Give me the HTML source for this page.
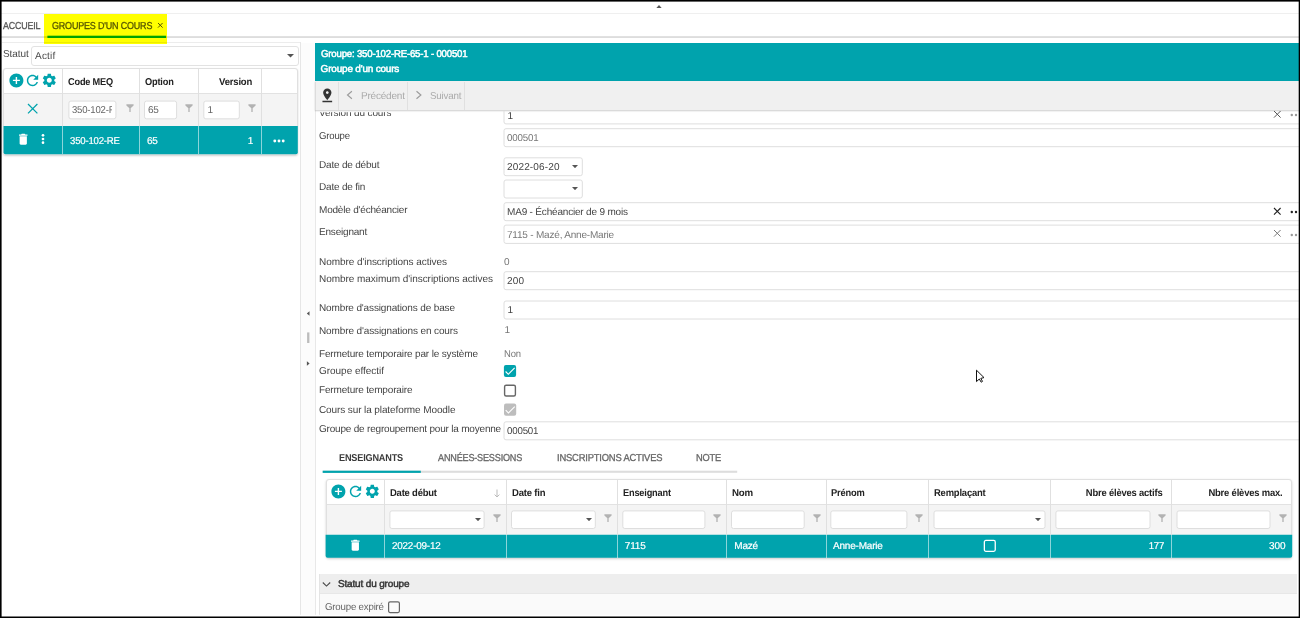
<!DOCTYPE html>
<html lang="fr"><head><meta charset="utf-8"><title>Groupes d'un cours</title>
<style>
html,body{margin:0;padding:0;}
body{width:1300px;height:618px;position:relative;overflow:hidden;background:#fff;font-family:"Liberation Sans", sans-serif;text-rendering:geometricPrecision;}
.b{position:absolute;box-sizing:content-box;display:block;}
.t{position:absolute;white-space:pre;line-height:1;margin:0;}
</style></head><body>
<div class="b" style="left:0px;top:13px;width:1300px;height:1px;background:#efefef;"></div>
<svg class="b" style="left:655.5px;top:4.8px;" width="6" height="3.4" viewBox="0 0 6 3.400"><path fill="#555" d="M0 3.400H6L3 0z"/></svg>
<svg class="b" style="left:0px;top:35px;" width="1300" height="4" viewBox="0 0 1300 4"><rect x="0" y="1.200" width="1300" height="1.700" fill="#dadada"/></svg>
<svg class="b" style="left:46px;top:34px;" width="122" height="6" viewBox="0 0 122 6"><rect x="1.400" y="1.700" width="118.600" height="2.300" fill="#00a3ad"/></svg>
<svg class="b" style="left:156.95px;top:22.3px;" width="6.6" height="6.6" viewBox="0 0 6.6 6.6"><path stroke="#555" stroke-width="1.0" fill="none" d="M1 1L5.6 5.6M5.6 1L1 5.6"/></svg>
<div class="b" style="left:2px;top:42px;width:298px;height:1px;background:#ececec;"></div>
<div class="b" style="left:300px;top:42px;width:1px;height:576px;background:#e6e6e6;"></div>
<div class="b" style="left:31px;top:46px;width:266px;height:18px;background:#fff;border:1px solid #e2e2e2;border-radius:3px;"></div>
<svg class="b" style="left:287.2px;top:54.2px;" width="7" height="3.6" viewBox="0 0 7 3.6"><path fill="#555" d="M0 0H7L3.5 3.6z"/></svg>
<div class="b" style="left:3px;top:68px;width:293px;height:85px;background:#fff;border:1px solid #e0e0e0;border-radius:3px;box-shadow:0 1px 2px rgba(0,0,0,.18);"></div>
<div class="b" style="left:4px;top:93.5px;width:293px;height:32.5px;background:#f4f4f4;"></div>
<div class="b" style="left:4px;top:93px;width:293px;height:1px;background:#e2e2e2;"></div>
<svg class="b" style="left:3px;top:125px;" width="296" height="31" viewBox="0 0 296 31"><path fill="#00a3ad" d="M0.550 1.050H294.800V27.200Q294.800 29.200 292.800 29.200H2.550Q0.550 29.200 0.550 27.200z"/></svg>
<div class="b" style="left:62px;top:69px;width:1px;height:57px;background:#e0e0e0;"></div>
<div class="b" style="left:62px;top:126px;width:1px;height:28.3px;background:rgba(255,255,255,.55);"></div>
<div class="b" style="left:139px;top:69px;width:1px;height:57px;background:#e0e0e0;"></div>
<div class="b" style="left:139px;top:126px;width:1px;height:28.3px;background:rgba(255,255,255,.55);"></div>
<div class="b" style="left:198px;top:69px;width:1px;height:57px;background:#e0e0e0;"></div>
<div class="b" style="left:198px;top:126px;width:1px;height:28.3px;background:rgba(255,255,255,.55);"></div>
<div class="b" style="left:261px;top:69px;width:1px;height:57px;background:#e0e0e0;"></div>
<div class="b" style="left:261px;top:126px;width:1px;height:28.3px;background:rgba(255,255,255,.55);"></div>
<svg class="b" style="left:7.8px;top:71.5px;" width="16.8" height="16.8" viewBox="0 0 24 24"><path fill="#00a3ad" d="M12 2C6.48 2 2 6.48 2 12s4.48 10 10 10 10-4.48 10-10S17.52 2 12 2zm5 11h-4v4h-2v-4H7v-2h4V7h2v4h4v2z"/></svg>
<svg class="b" style="left:24.3px;top:71.6px;" width="17" height="17" viewBox="0 0 24 24"><path fill="#00a3ad" d="M17.65 6.35C16.2 4.9 14.21 4 12 4c-4.42 0-7.99 3.58-7.99 8s3.57 8 7.99 8c3.73 0 6.84-2.55 7.73-6h-2.08c-.82 2.33-3.04 4-5.65 4-3.31 0-6-2.69-6-6s2.69-6 6-6c1.66 0 3.14.69 4.22 1.78L13 11h7V4l-2.35 2.35z"/></svg>
<svg class="b" style="left:41.4px;top:71.7px;" width="16.6" height="16.6" viewBox="0 0 24 24"><path fill="#00a3ad" d="M19.14 12.94c.04-.3.06-.61.06-.94 0-.32-.02-.64-.07-.94l2.03-1.58c.18-.14.23-.41.12-.61l-1.92-3.32c-.12-.22-.37-.29-.59-.22l-2.39.96c-.5-.38-1.03-.7-1.62-.94l-.36-2.54c-.04-.24-.24-.41-.48-.41h-3.84c-.24 0-.43.17-.47.41l-.36 2.54c-.59.24-1.13.57-1.62.94l-2.39-.96c-.22-.08-.47 0-.59.22L2.74 8.87c-.12.21-.08.47.12.61l2.03 1.58c-.05.3-.09.63-.09.94s.02.64.07.94l-2.03 1.58c-.18.14-.23.41-.12.61l1.92 3.32c.12.22.37.29.59.22l2.39-.96c.5.38 1.03.7 1.62.94l.36 2.54c.05.24.24.41.48.41h3.84c.24 0 .44-.17.47-.41l.36-2.54c.59-.24 1.13-.56 1.62-.94l2.39.96c.22.08.47 0 .59-.22l1.92-3.32c.12-.22.07-.47-.12-.61l-2.01-1.580zM12 15.6c-1.980 0-3.600-1.620-3.600-3.600s1.620-3.600 3.600-3.600 3.600 1.620 3.600 3.600-1.620 3.600-3.600 3.600z"/></svg>
<svg class="b" style="left:27.3px;top:102.7px;" width="11.4" height="11.4" viewBox="0 0 11.4 11.4"><path stroke="#00a3ad" stroke-width="1.25" fill="none" d="M1 1L10.4 10.4M10.4 1L1 10.4"/></svg>
<svg class="b" style="left:67px;top:99px;" width="52" height="22" viewBox="0 0 52 22"><rect x="1.90" y="2.10" width="47.00" height="17.70" rx="2" fill="#fff" stroke="#dedede" stroke-width="1"/></svg>
<svg class="b" style="left:126.3px;top:103.9px;" width="8" height="8.4" viewBox="0 0 8 8.400"><path fill="#b2b2b2" d="M0.400 0.300H7.600V1.500L4.650 4.300V8H3.350V4.300L0.400 1.500z"/></svg>
<svg class="b" style="left:143px;top:99px;" width="37" height="22" viewBox="0 0 37 22"><rect x="1.50" y="2.10" width="32.10" height="17.70" rx="2" fill="#fff" stroke="#dedede" stroke-width="1"/></svg>
<svg class="b" style="left:184.9px;top:103.9px;" width="8" height="8.4" viewBox="0 0 8 8.400"><path fill="#b2b2b2" d="M0.400 0.300H7.600V1.500L4.650 4.300V8H3.350V4.300L0.400 1.500z"/></svg>
<svg class="b" style="left:202px;top:99px;" width="40" height="22" viewBox="0 0 40 22"><rect x="1.80" y="2.10" width="35.50" height="17.70" rx="2" fill="#fff" stroke="#dedede" stroke-width="1"/></svg>
<svg class="b" style="left:247.65px;top:103.9px;" width="8" height="8.4" viewBox="0 0 8 8.400"><path fill="#b2b2b2" d="M0.400 0.300H7.600V1.500L4.650 4.300V8H3.350V4.300L0.400 1.500z"/></svg>
<svg class="b" style="left:15.6px;top:131.85px;" width="14.5" height="14.5" viewBox="0 0 24 24"><path fill="#fff" d="M6 19c0 1.100.900 2 2 2h8c1.100 0 2-.900 2-2V7H6v12zM19 4h-3.500l-1-1h-5l-1 1H5v2h14V4z"/></svg>
<svg class="b" style="left:41px;top:133.4px;" width="4" height="12" viewBox="0 0 4 12"><circle cx="2" cy="2.35" r="1.35" fill="#fff"/><circle cx="2" cy="6.0" r="1.35" fill="#fff"/><circle cx="2" cy="9.65" r="1.35" fill="#fff"/></svg>
<svg class="b" style="left:273.3px;top:138.5px;" width="12" height="4" viewBox="0 0 12 4"><circle cx="1.7999999999999998" cy="2" r="1.45" fill="#fff"/><circle cx="6.0" cy="2" r="1.45" fill="#fff"/><circle cx="10.2" cy="2" r="1.45" fill="#fff"/></svg>
<div class="b" style="left:301px;top:43px;width:14px;height:575px;background:#fcfcfc;"></div>
<div class="b" style="left:315px;top:43px;width:1px;height:575px;background:#e8e8e8;"></div>
<svg class="b" style="left:306px;top:310.5px;" width="4" height="5" viewBox="0 0 4 5"><path fill="#555" d="M3.500 0.300V4.700L0.800 2.500z"/></svg>
<svg class="b" style="left:306px;top:360.5px;" width="4" height="5" viewBox="0 0 4 5"><path fill="#555" d="M0.900 0.300V4.700L3.600 2.500z"/></svg>
<svg class="b" style="left:306px;top:332px;" width="5" height="12" viewBox="0 0 5 12"><rect x="1.100" y="0.400" width="2.300" height="10.600" fill="#bcbcbc"/></svg>
<div class="b" style="left:315.3px;top:43px;width:985px;height:37.6px;background:#00a3ad;"></div>
<div class="b" style="left:315.3px;top:80.6px;width:985px;height:29.5px;background:#f0f0f0;box-shadow:0 1px 1.500px rgba(0,0,0,.2);"></div>
<div class="b" style="left:315.3px;top:81.5px;width:1px;height:28.5px;background:#dcdcdc;"></div>
<div class="b" style="left:338px;top:81.5px;width:1px;height:28.5px;background:#e0e0e0;"></div>
<div class="b" style="left:407px;top:81.5px;width:1px;height:28.5px;background:#e0e0e0;"></div>
<div class="b" style="left:464px;top:81.5px;width:1px;height:28.5px;background:#e0e0e0;"></div>
<svg class="b" style="left:319.15px;top:87.0px;" width="16.6" height="16.6" viewBox="0 0 24 24"><path fill="#333" d="M18 8c0-3.310-2.690-6-6-6S6 4.690 6 8c0 4.500 6 11 6 11s6-6.500 6-11zm-8 0c0-1.100.900-2 2-2s2 .900 2 2-.890 2-2 2c-1.100 0-2-.900-2-2zM5 20v2h14v-2H5z"/></svg>
<svg class="b" style="left:346px;top:90.4px;" width="8" height="10" viewBox="0 0 8 10"><path fill="none" stroke="#9c9c9c" stroke-width="1.150" d="M5.900 1.300L1.500 5L5.900 8.700"/></svg>
<svg class="b" style="left:415px;top:90.4px;" width="8" height="10" viewBox="0 0 8 10"><path fill="none" stroke="#9c9c9c" stroke-width="1.150" d="M1.500 1.300L5.900 5L1.500 8.700"/></svg>
<svg class="b" style="left:502px;top:110px;" width="800" height="16" viewBox="0 0 800 16"><path fill="none" stroke="#dedede" stroke-width="1" d="M2 1V11.900Q2 13.900 4 13.900H800"/></svg>
<svg class="b" style="left:1272.7px;top:109.9px;" width="8.6" height="8.6" viewBox="0 0 8.6 8.6"><path stroke="#555" stroke-width="1.0" fill="none" d="M1 1L7.6 7.6M7.6 1L1 7.6"/></svg>
<svg class="b" style="left:1290.3px;top:113.3px;" width="12" height="4" viewBox="0 0 12 4"><circle cx="1.7999999999999998" cy="2" r="1.2" fill="#9a9a9a"/><circle cx="6.0" cy="2" r="1.2" fill="#9a9a9a"/><circle cx="10.2" cy="2" r="1.2" fill="#9a9a9a"/></svg>
<svg class="b" style="left:502px;top:127px;" width="804" height="23" viewBox="0 0 804 23"><rect x="2.00" y="1.70" width="799.00" height="18.00" rx="2" fill="#fff" stroke="#dedede" stroke-width="1"/></svg>
<svg class="b" style="left:502px;top:156px;" width="83" height="22" viewBox="0 0 83 22"><rect x="2.00" y="1.80" width="78.30" height="17.90" rx="2" fill="#fff" stroke="#dedede" stroke-width="1"/></svg>
<svg class="b" style="left:572.4px;top:165.3px;" width="6" height="3.2" viewBox="0 0 6 3.2"><path fill="#555" d="M0 0H6L3.0 3.2z"/></svg>
<svg class="b" style="left:502px;top:178px;" width="83" height="23" viewBox="0 0 83 23"><rect x="2.00" y="2.00" width="78.30" height="18.00" rx="2" fill="#fff" stroke="#dedede" stroke-width="1"/></svg>
<svg class="b" style="left:572.4px;top:187.3px;" width="6" height="3.2" viewBox="0 0 6 3.2"><path fill="#555" d="M0 0H6L3.0 3.2z"/></svg>
<svg class="b" style="left:502px;top:201px;" width="804" height="23" viewBox="0 0 804 23"><rect x="2.00" y="1.70" width="799.00" height="18.00" rx="2" fill="#fff" stroke="#dedede" stroke-width="1"/></svg>
<svg class="b" style="left:1272.7px;top:206.7px;" width="8.6" height="8.6" viewBox="0 0 8.6 8.6"><path stroke="#222" stroke-width="1.1" fill="none" d="M1 1L7.6 7.6M7.6 1L1 7.6"/></svg>
<svg class="b" style="left:1290.3px;top:210.2px;" width="12" height="4" viewBox="0 0 12 4"><circle cx="1.7999999999999998" cy="2" r="1.2" fill="#222"/><circle cx="6.0" cy="2" r="1.2" fill="#222"/><circle cx="10.2" cy="2" r="1.2" fill="#222"/></svg>
<svg class="b" style="left:502px;top:223px;" width="804" height="23" viewBox="0 0 804 23"><rect x="2.00" y="2.10" width="799.00" height="18.30" rx="2" fill="#fff" stroke="#dedede" stroke-width="1"/></svg>
<svg class="b" style="left:1272.7px;top:229.39999999999998px;" width="8.6" height="8.6" viewBox="0 0 8.6 8.6"><path stroke="#777" stroke-width="1.0" fill="none" d="M1 1L7.6 7.6M7.6 1L1 7.6"/></svg>
<svg class="b" style="left:1290.3px;top:232.9px;" width="12" height="4" viewBox="0 0 12 4"><circle cx="1.7999999999999998" cy="2" r="1.2" fill="#9a9a9a"/><circle cx="6.0" cy="2" r="1.2" fill="#9a9a9a"/><circle cx="10.2" cy="2" r="1.2" fill="#9a9a9a"/></svg>
<svg class="b" style="left:502px;top:270px;" width="804" height="23" viewBox="0 0 804 23"><rect x="2.00" y="1.70" width="799.00" height="18.00" rx="2" fill="#fff" stroke="#dedede" stroke-width="1"/></svg>
<svg class="b" style="left:502px;top:299px;" width="804" height="23" viewBox="0 0 804 23"><rect x="2.00" y="2.00" width="799.00" height="18.00" rx="2" fill="#fff" stroke="#dedede" stroke-width="1"/></svg>
<svg class="b" style="left:502px;top:363px;" width="16" height="16" viewBox="0 0 16 16"><rect x="1.90" y="1.90" width="12.2" height="12.2" rx="2" fill="#00a3ad"/><path fill="#fff" transform="translate(1.30 1.40) scale(0.5583)" d="M9 16.17L4.83 12l-1.420 1.410L9 19 21 7l-1.410-1.410z"/></svg>
<svg class="b" style="left:502px;top:383px;" width="16" height="16" viewBox="0 0 16 16"><rect x="2.60" y="2.20" width="10.80" height="10.80" rx="1.500" fill="#fff" stroke="#666" stroke-width="1.4"/></svg>
<svg class="b" style="left:503px;top:402px;" width="16" height="16" viewBox="0 0 16 16"><rect x="1.00" y="1.60" width="12.2" height="12.2" rx="2" fill="#bdbdbd"/><path fill="#fff" transform="translate(0.40 1.10) scale(0.5583)" d="M9 16.17L4.83 12l-1.420 1.410L9 19 21 7l-1.410-1.410z"/></svg>
<svg class="b" style="left:502px;top:420px;" width="804" height="23" viewBox="0 0 804 23"><rect x="2.00" y="1.80" width="799.00" height="18.00" rx="2" fill="#fff" stroke="#dedede" stroke-width="1"/></svg>
<svg class="b" style="left:322px;top:469px;" width="416" height="5" viewBox="0 0 416 5"><rect x="0.700" y="1.700" width="414.500" height="2.100" fill="#dddddd"/><rect x="0.700" y="1.700" width="98.100" height="2.200" fill="#00a3ad"/></svg>
<div class="b" style="left:325.5px;top:479px;width:964.8px;height:77px;background:#fff;border:1px solid #e0e0e0;border-radius:3px;box-shadow:0 1px 2.500px rgba(0,0,0,.2);"></div>
<div class="b" style="left:326.5px;top:505px;width:964.8px;height:30px;background:#f4f4f4;"></div>
<div class="b" style="left:326.5px;top:504.3px;width:964.8px;height:1px;background:#e2e2e2;"></div>
<svg class="b" style="left:325px;top:534px;" width="969" height="25" viewBox="0 0 969 25"><path fill="#00a3ad" d="M0.600 0.800H967.200V21.700Q967.200 23.700 965.200 23.700H2.600Q0.600 23.700 0.600 21.700z"/></svg>
<div class="b" style="left:384.3px;top:480px;width:1px;height:55px;background:#e0e0e0;"></div>
<div class="b" style="left:384.3px;top:534.7px;width:1px;height:23.2px;background:rgba(255,255,255,.55);"></div>
<div class="b" style="left:506.2px;top:480px;width:1px;height:55px;background:#e0e0e0;"></div>
<div class="b" style="left:506.2px;top:534.7px;width:1px;height:23.2px;background:rgba(255,255,255,.55);"></div>
<div class="b" style="left:617px;top:480px;width:1px;height:55px;background:#e0e0e0;"></div>
<div class="b" style="left:617px;top:534.7px;width:1px;height:23.2px;background:rgba(255,255,255,.55);"></div>
<div class="b" style="left:726.3px;top:480px;width:1px;height:55px;background:#e0e0e0;"></div>
<div class="b" style="left:726.3px;top:534.7px;width:1px;height:23.2px;background:rgba(255,255,255,.55);"></div>
<div class="b" style="left:825.5px;top:480px;width:1px;height:55px;background:#e0e0e0;"></div>
<div class="b" style="left:825.5px;top:534.7px;width:1px;height:23.2px;background:rgba(255,255,255,.55);"></div>
<div class="b" style="left:928.2px;top:480px;width:1px;height:55px;background:#e0e0e0;"></div>
<div class="b" style="left:928.2px;top:534.7px;width:1px;height:23.2px;background:rgba(255,255,255,.55);"></div>
<div class="b" style="left:1050.1px;top:480px;width:1px;height:55px;background:#e0e0e0;"></div>
<div class="b" style="left:1050.1px;top:534.7px;width:1px;height:23.2px;background:rgba(255,255,255,.55);"></div>
<div class="b" style="left:1171.3px;top:480px;width:1px;height:55px;background:#e0e0e0;"></div>
<div class="b" style="left:1171.3px;top:534.7px;width:1px;height:23.2px;background:rgba(255,255,255,.55);"></div>
<svg class="b" style="left:329.9px;top:482.7px;" width="16.8" height="16.8" viewBox="0 0 24 24"><path fill="#00a3ad" d="M12 2C6.48 2 2 6.48 2 12s4.48 10 10 10 10-4.48 10-10S17.52 2 12 2zm5 11h-4v4h-2v-4H7v-2h4V7h2v4h4v2z"/></svg>
<svg class="b" style="left:346.9px;top:482.7px;" width="17" height="17" viewBox="0 0 24 24"><path fill="#00a3ad" d="M17.65 6.35C16.2 4.9 14.21 4 12 4c-4.42 0-7.99 3.58-7.99 8s3.57 8 7.99 8c3.73 0 6.84-2.55 7.73-6h-2.08c-.82 2.33-3.04 4-5.65 4-3.31 0-6-2.69-6-6s2.69-6 6-6c1.66 0 3.14.69 4.22 1.78L13 11h7V4l-2.35 2.35z"/></svg>
<svg class="b" style="left:363.6px;top:482.8px;" width="16.6" height="16.6" viewBox="0 0 24 24"><path fill="#00a3ad" d="M19.14 12.94c.04-.3.06-.61.06-.94 0-.32-.02-.64-.07-.94l2.03-1.58c.18-.14.23-.41.12-.61l-1.92-3.32c-.12-.22-.37-.29-.59-.22l-2.39.96c-.5-.38-1.03-.7-1.62-.94l-.36-2.54c-.04-.24-.24-.41-.48-.41h-3.84c-.24 0-.43.17-.47.41l-.36 2.54c-.59.24-1.13.57-1.62.94l-2.39-.96c-.22-.08-.47 0-.59.22L2.74 8.87c-.12.21-.08.47.12.61l2.03 1.58c-.05.3-.09.63-.09.94s.02.64.07.94l-2.03 1.58c-.18.14-.23.41-.12.61l1.92 3.32c.12.22.37.29.59.22l2.39-.96c.5.38 1.03.7 1.62.94l.36 2.54c.05.24.24.41.48.41h3.84c.24 0 .44-.17.47-.41l.36-2.54c.59-.24 1.13-.56 1.62-.94l2.39.96c.22.08.47 0 .59-.22l1.92-3.32c.12-.22.07-.47-.12-.61l-2.01-1.580zM12 15.6c-1.980 0-3.600-1.620-3.600-3.600s1.620-3.600 3.600-3.600 3.600 1.620 3.600 3.600-1.620 3.600-3.600 3.600z"/></svg>
<svg class="b" style="left:493.7px;top:488.6px;" width="6" height="9" viewBox="0 0 6 9"><path fill="none" stroke="#bbb" stroke-width="1" d="M3 0.500V8M0.600 5.600L3 8L5.400 5.600"/></svg>
<svg class="b" style="left:388px;top:509px;" width="99" height="22" viewBox="0 0 99 22"><rect x="1.90" y="1.90" width="94.20" height="17.60" rx="2" fill="#fff" stroke="#dedede" stroke-width="1"/></svg>
<svg class="b" style="left:474.5px;top:518.0px;" width="6" height="3.2" viewBox="0 0 6 3.2"><path fill="#555" d="M0 0H6L3.0 3.2z"/></svg>
<svg class="b" style="left:492.7px;top:513.8px;" width="8" height="8.4" viewBox="0 0 8 8.400"><path fill="#b2b2b2" d="M0.400 0.300H7.600V1.500L4.650 4.300V8H3.350V4.300L0.400 1.500z"/></svg>
<svg class="b" style="left:510px;top:509px;" width="88" height="22" viewBox="0 0 88 22"><rect x="1.50" y="1.90" width="83.80" height="17.60" rx="2" fill="#fff" stroke="#dedede" stroke-width="1"/></svg>
<svg class="b" style="left:585.7px;top:518.0px;" width="6" height="3.2" viewBox="0 0 6 3.2"><path fill="#555" d="M0 0H6L3.0 3.2z"/></svg>
<svg class="b" style="left:603.8px;top:513.8px;" width="8" height="8.4" viewBox="0 0 8 8.400"><path fill="#b2b2b2" d="M0.400 0.300H7.600V1.500L4.650 4.300V8H3.350V4.300L0.400 1.500z"/></svg>
<svg class="b" style="left:621px;top:509px;" width="87" height="22" viewBox="0 0 87 22"><rect x="1.80" y="1.90" width="82.10" height="17.60" rx="2" fill="#fff" stroke="#dedede" stroke-width="1"/></svg>
<svg class="b" style="left:713px;top:513.8px;" width="8" height="8.4" viewBox="0 0 8 8.400"><path fill="#b2b2b2" d="M0.400 0.300H7.600V1.500L4.650 4.300V8H3.350V4.300L0.400 1.500z"/></svg>
<svg class="b" style="left:730px;top:509px;" width="77" height="22" viewBox="0 0 77 22"><rect x="1.50" y="1.90" width="72.70" height="17.60" rx="2" fill="#fff" stroke="#dedede" stroke-width="1"/></svg>
<svg class="b" style="left:812.5px;top:513.8px;" width="8" height="8.4" viewBox="0 0 8 8.400"><path fill="#b2b2b2" d="M0.400 0.300H7.600V1.500L4.650 4.300V8H3.350V4.300L0.400 1.500z"/></svg>
<svg class="b" style="left:829px;top:509px;" width="81" height="22" viewBox="0 0 81 22"><rect x="1.80" y="1.90" width="76.10" height="17.60" rx="2" fill="#fff" stroke="#dedede" stroke-width="1"/></svg>
<svg class="b" style="left:915.2px;top:513.8px;" width="8" height="8.4" viewBox="0 0 8 8.400"><path fill="#b2b2b2" d="M0.400 0.300H7.600V1.500L4.650 4.300V8H3.350V4.300L0.400 1.500z"/></svg>
<svg class="b" style="left:932px;top:509px;" width="116" height="22" viewBox="0 0 116 22"><rect x="2.00" y="1.90" width="111.00" height="17.60" rx="2" fill="#fff" stroke="#dedede" stroke-width="1"/></svg>
<svg class="b" style="left:1035.0px;top:517.8px;" width="6" height="3.2" viewBox="0 0 6 3.2"><path fill="#555" d="M0 0H6L3.0 3.2z"/></svg>
<svg class="b" style="left:1054px;top:509px;" width="99" height="22" viewBox="0 0 99 22"><rect x="1.90" y="1.90" width="94.10" height="17.60" rx="2" fill="#fff" stroke="#dedede" stroke-width="1"/></svg>
<svg class="b" style="left:1158.2px;top:513.8px;" width="8" height="8.4" viewBox="0 0 8 8.400"><path fill="#b2b2b2" d="M0.400 0.300H7.600V1.500L4.650 4.300V8H3.350V4.300L0.400 1.500z"/></svg>
<svg class="b" style="left:1175px;top:509px;" width="98" height="22" viewBox="0 0 98 22"><rect x="2.00" y="1.90" width="93.00" height="17.60" rx="2" fill="#fff" stroke="#dedede" stroke-width="1"/></svg>
<svg class="b" style="left:1278.7px;top:513.8px;" width="8" height="8.4" viewBox="0 0 8 8.400"><path fill="#b2b2b2" d="M0.400 0.300H7.600V1.500L4.650 4.300V8H3.350V4.300L0.400 1.500z"/></svg>
<svg class="b" style="left:348.15px;top:537.8px;" width="14.6" height="14.6" viewBox="0 0 24 24"><path fill="#fff" d="M6 19c0 1.100.900 2 2 2h8c1.100 0 2-.900 2-2V7H6v12zM19 4h-3.500l-1-1h-5l-1 1H5v2h14V4z"/></svg>
<svg class="b" style="left:982px;top:538px;" width="16" height="16" viewBox="0 0 16 16"><rect x="2.35" y="2.45" width="10.90" height="10.90" rx="1.500" fill="none" stroke="#fff" stroke-width="1.3"/></svg>
<div class="b" style="left:319px;top:574px;width:978px;height:20px;background:#eeeeee;"></div>
<div class="b" style="left:319px;top:594px;width:978px;height:22px;background:#fafafa;"></div>
<div class="b" style="left:319px;top:593px;width:978px;height:1px;background:#e7e7e7;"></div>
<div class="b" style="left:319px;top:574px;width:1px;height:42px;background:#e4e4e4;"></div>
<svg class="b" style="left:322.4px;top:580.6px;" width="9" height="7" viewBox="0 0 9 7"><path fill="none" stroke="#4a4a4a" stroke-width="1.100" d="M0.800 1.500L4.500 5.100L8.200 1.500"/></svg>
<svg class="b" style="left:387px;top:600px;" width="16" height="16" viewBox="0 0 16 16"><rect x="1.60" y="1.80" width="10.80" height="10.80" rx="1.500" fill="#fafafa" stroke="#666" stroke-width="1.2"/></svg>
<svg class="b" style="left:975px;top:369px;" width="11" height="14" viewBox="0 0 11 14"><path fill="#fff" stroke="#111" stroke-width="1" d="M1.500 1.200V12.600L4.300 10L6.200 13.200L7.500 12.400L5.800 9.400L9 8.600z"/></svg>
<span class="t" id="t0" style="top:22px;font-size:10px;color:#555;letter-spacing:-0.200px;left:3px;transform:scaleX(0.8895);transform-origin:0 0;-webkit-text-stroke:0.3px #555;">ACCUEIL</span>
<span class="t" id="t1" style="top:22px;font-size:10px;color:#555;letter-spacing:-0.200px;left:51.5px;transform:scaleX(0.8975);transform-origin:0 0;-webkit-text-stroke:0.3px #555;">GROUPES D'UN COURS</span>
<span class="t" id="t2" style="top:50px;font-size:10px;color:#484848;letter-spacing:-0.068px;left:3px;">Statut</span>
<span class="t" id="t3" style="top:52px;font-size:10px;color:#484848;letter-spacing:0.212px;left:35px;">Actif</span>
<span class="t" id="t4" style="top:78px;font-size:10px;color:#222;font-weight:700;letter-spacing:-0.200px;left:68px;transform:scaleX(0.9194);transform-origin:0 0;">Code MEQ</span>
<span class="t" id="t5" style="top:78px;font-size:10px;color:#222;font-weight:700;letter-spacing:-0.200px;left:145px;transform:scaleX(0.9225);transform-origin:0 0;">Option</span>
<span class="t" id="t6" style="top:78px;font-size:10px;color:#222;font-weight:700;letter-spacing:-0.200px;left:219px;transform:scaleX(0.9530);transform-origin:0 0;">Version</span>
<span class="t" id="t7" style="top:106px;font-size:10px;color:#666;letter-spacing:-0.200px;left:71.8px;transform:scaleX(0.9542);transform-origin:0 0;clip-path:inset(-3px 2.500px -3px 0);">350-102-F</span>
<span class="t" id="t8" style="top:106px;font-size:10px;color:#666;letter-spacing:-0.200px;left:147.9px;">65</span>
<span class="t" id="t9" style="top:106px;font-size:10px;color:#666;left:207.6px;">1</span>
<span class="t" id="t10" style="top:137px;font-size:10px;color:#fff;letter-spacing:-0.200px;left:69.5px;transform:scaleX(0.9593);transform-origin:0 0;-webkit-text-stroke:0.2px #fff;">350-102-RE</span>
<span class="t" id="t11" style="top:137px;font-size:10px;color:#fff;letter-spacing:-0.200px;left:147px;-webkit-text-stroke:0.2px #fff;">65</span>
<span class="t" id="t12" style="top:137px;font-size:10px;color:#fff;right:1046.70px;-webkit-text-stroke:0.2px #fff;">1</span>
<span class="t" id="t13" style="top:50px;font-size:10px;color:#fff;letter-spacing:-0.200px;left:320.6px;transform:scaleX(0.9630);transform-origin:0 0;-webkit-text-stroke:0.5px #fff;">Groupe: 350-102-RE-65-1 - 000501</span>
<span class="t" id="t14" style="top:65px;font-size:10px;color:#fff;letter-spacing:-0.200px;left:320.6px;-webkit-text-stroke:0.5px #fff;">Groupe d'un cours</span>
<span class="t" id="t15" style="top:92px;font-size:10px;color:#aaa;letter-spacing:-0.200px;left:361px;">Précédent</span>
<span class="t" id="t16" style="top:92px;font-size:10px;color:#aaa;letter-spacing:-0.200px;left:429.5px;transform:scaleX(0.9795);transform-origin:0 0;">Suivant</span>
<span class="t" id="t17" style="top:109px;font-size:10px;color:#444;letter-spacing:-0.133px;left:319px;clip-path:inset(3.300px 0 -3px 0);">Version du cours</span>
<span class="t" id="t18" style="top:112px;font-size:10px;color:#444;left:507.4px;">1</span>
<span class="t" id="t19" style="top:132px;font-size:10px;color:#444;letter-spacing:-0.200px;left:319px;transform:scaleX(0.9580);transform-origin:0 0;">Groupe</span>
<span class="t" id="t20" style="top:134px;font-size:10px;color:#777;letter-spacing:-0.200px;left:507.3px;transform:scaleX(0.9761);transform-origin:0 0;">000501</span>
<span class="t" id="t21" style="top:161px;font-size:10px;color:#444;letter-spacing:-0.200px;left:319px;">Date de début</span>
<span class="t" id="t22" style="top:163px;font-size:10px;color:#444;letter-spacing:0.149px;left:507px;">2022-06-20</span>
<span class="t" id="t23" style="top:183px;font-size:10px;color:#444;letter-spacing:-0.200px;left:319px;">Date de fin</span>
<span class="t" id="t24" style="top:206px;font-size:10px;color:#444;letter-spacing:-0.193px;left:319px;">Modèle d'échéancier</span>
<span class="t" id="t25" style="top:208px;font-size:10px;color:#444;letter-spacing:-0.185px;left:507px;">MA9 - Échéancier de 9 mois</span>
<span class="t" id="t26" style="top:228px;font-size:10px;color:#444;letter-spacing:-0.200px;left:319px;">Enseignant</span>
<span class="t" id="t27" style="top:231px;font-size:10px;color:#777;letter-spacing:-0.200px;left:507px;">7115 - Mazé, Anne-Marie</span>
<span class="t" id="t28" style="top:258px;font-size:10px;color:#444;letter-spacing:-0.062px;left:319px;">Nombre d'inscriptions actives</span>
<span class="t" id="t29" style="top:258px;font-size:10px;color:#777;left:504px;">0</span>
<span class="t" id="t30" style="top:275px;font-size:10px;color:#444;letter-spacing:-0.052px;left:319px;">Nombre maximum d'inscriptions actives</span>
<span class="t" id="t31" style="top:277px;font-size:10px;color:#444;letter-spacing:0.156px;left:507px;">200</span>
<span class="t" id="t32" style="top:304px;font-size:10px;color:#444;letter-spacing:-0.135px;left:319px;">Nombre d'assignations de base</span>
<span class="t" id="t33" style="top:306px;font-size:10px;color:#444;left:507.5px;">1</span>
<span class="t" id="t34" style="top:327px;font-size:10px;color:#444;letter-spacing:-0.122px;left:319px;">Nombre d'assignations en cours</span>
<span class="t" id="t35" style="top:326px;font-size:10px;color:#777;left:504.5px;">1</span>
<span class="t" id="t36" style="top:350px;font-size:10px;color:#444;letter-spacing:-0.162px;left:319px;">Fermeture temporaire par le système</span>
<span class="t" id="t37" style="top:350px;font-size:10px;color:#777;letter-spacing:-0.200px;left:504px;transform:scaleX(0.9466);transform-origin:0 0;">Non</span>
<span class="t" id="t38" style="top:367px;font-size:10px;color:#444;letter-spacing:-0.030px;left:319px;">Groupe effectif</span>
<span class="t" id="t39" style="top:386px;font-size:10px;color:#444;letter-spacing:-0.169px;left:319px;">Fermeture temporaire</span>
<span class="t" id="t40" style="top:406px;font-size:10px;color:#444;letter-spacing:-0.104px;left:319px;">Cours sur la plateforme Moodle</span>
<span class="t" id="t41" style="top:425px;font-size:10px;color:#444;letter-spacing:-0.200px;left:319px;">Groupe de regroupement pour la moyenne</span>
<span class="t" id="t42" style="top:427px;font-size:10px;color:#444;letter-spacing:-0.200px;left:507.3px;transform:scaleX(0.9730);transform-origin:0 0;">000501</span>
<span class="t" id="t43" style="top:454px;font-size:10px;color:#3a3a3a;font-weight:700;letter-spacing:-0.200px;left:339.3px;transform:scaleX(0.9141);transform-origin:0 0;">ENSEIGNANTS</span>
<span class="t" id="t44" style="top:454px;font-size:10px;color:#666;letter-spacing:-0.200px;left:438px;transform:scaleX(0.9085);transform-origin:0 0;-webkit-text-stroke:0.3px #666;">ANNÉES-SESSIONS</span>
<span class="t" id="t45" style="top:454px;font-size:10px;color:#666;letter-spacing:-0.200px;left:556.5px;transform:scaleX(0.9391);transform-origin:0 0;-webkit-text-stroke:0.3px #666;">INSCRIPTIONS ACTIVES</span>
<span class="t" id="t46" style="top:454px;font-size:10px;color:#666;letter-spacing:-0.200px;left:695.7px;transform:scaleX(0.9271);transform-origin:0 0;-webkit-text-stroke:0.3px #666;">NOTE</span>
<span class="t" id="t47" style="top:489px;font-size:10px;color:#222;font-weight:700;letter-spacing:-0.200px;left:390px;transform:scaleX(0.9424);transform-origin:0 0;">Date début</span>
<span class="t" id="t48" style="top:489px;font-size:10px;color:#222;font-weight:700;letter-spacing:-0.200px;left:511.5px;transform:scaleX(0.9498);transform-origin:0 0;">Date fin</span>
<span class="t" id="t49" style="top:489px;font-size:10px;color:#222;font-weight:700;letter-spacing:-0.200px;left:622.8px;transform:scaleX(0.9212);transform-origin:0 0;">Enseignant</span>
<span class="t" id="t50" style="top:489px;font-size:10px;color:#222;font-weight:700;letter-spacing:-0.200px;left:732px;transform:scaleX(0.9709);transform-origin:0 0;">Nom</span>
<span class="t" id="t51" style="top:489px;font-size:10px;color:#222;font-weight:700;letter-spacing:-0.200px;left:831.2px;transform:scaleX(0.9328);transform-origin:0 0;">Prénom</span>
<span class="t" id="t52" style="top:489px;font-size:10px;color:#222;font-weight:700;letter-spacing:-0.200px;left:934.2px;transform:scaleX(0.9419);transform-origin:0 0;">Remplaçant</span>
<span class="t" id="t53" style="top:489px;font-size:10px;color:#222;font-weight:700;letter-spacing:-0.200px;right:137.49px;transform:scaleX(0.9405);transform-origin:100% 0;">Nbre élèves actifs</span>
<span class="t" id="t54" style="top:489px;font-size:10px;color:#222;font-weight:700;letter-spacing:-0.200px;right:16.99px;transform:scaleX(0.9439);transform-origin:100% 0;">Nbre élèves max.</span>
<span class="t" id="t55" style="top:542px;font-size:10px;color:#fff;letter-spacing:-0.200px;left:392.3px;transform:scaleX(0.9867);transform-origin:0 0;-webkit-text-stroke:0.2px #fff;">2022-09-12</span>
<span class="t" id="t56" style="top:542px;font-size:10px;color:#fff;letter-spacing:-0.172px;left:624.8px;-webkit-text-stroke:0.2px #fff;">7115</span>
<span class="t" id="t57" style="top:542px;font-size:10px;color:#fff;letter-spacing:-0.200px;left:734.3px;-webkit-text-stroke:0.2px #fff;">Mazé</span>
<span class="t" id="t58" style="top:542px;font-size:10px;color:#fff;letter-spacing:-0.200px;left:833px;-webkit-text-stroke:0.2px #fff;">Anne-Marie</span>
<span class="t" id="t59" style="top:542px;font-size:10px;color:#fff;letter-spacing:-0.200px;right:135.69px;transform:scaleX(0.9578);transform-origin:100% 0;-webkit-text-stroke:0.2px #fff;">177</span>
<span class="t" id="t60" style="top:542px;font-size:10px;color:#fff;letter-spacing:-0.044px;right:14.54px;-webkit-text-stroke:0.2px #fff;">300</span>
<span class="t" id="t61" style="top:580px;font-size:10px;color:#333;letter-spacing:-0.150px;left:337.9px;-webkit-text-stroke:0.45px #333;">Statut du groupe</span>
<span class="t" id="t62" style="top:603px;font-size:10px;color:#666;letter-spacing:-0.200px;left:325px;transform:scaleX(0.9676);transform-origin:0 0;">Groupe expiré</span>
<svg class="b" style="left:0;top:0" width="1300" height="618" viewBox="0 0 1300 618"><rect x="1297" y="590" width="2" height="27" fill="#fff"/><rect x="1" y="614.800" width="1298" height="2" fill="#fff"/><rect x="0" y="0" width="1300" height="1.600" fill="#000"/><rect x="0" y="0" width="1.600" height="618" fill="#000"/><rect x="1298.700" y="0" width="1.300" height="618" fill="#000"/><rect x="0" y="616.500" width="1300" height="1.500" fill="#000"/></svg>
<div class="b" style="left:44px;top:14.200px;width:123px;height:29.400px;background:#ffff00;mix-blend-mode:multiply"></div>
</body></html>
